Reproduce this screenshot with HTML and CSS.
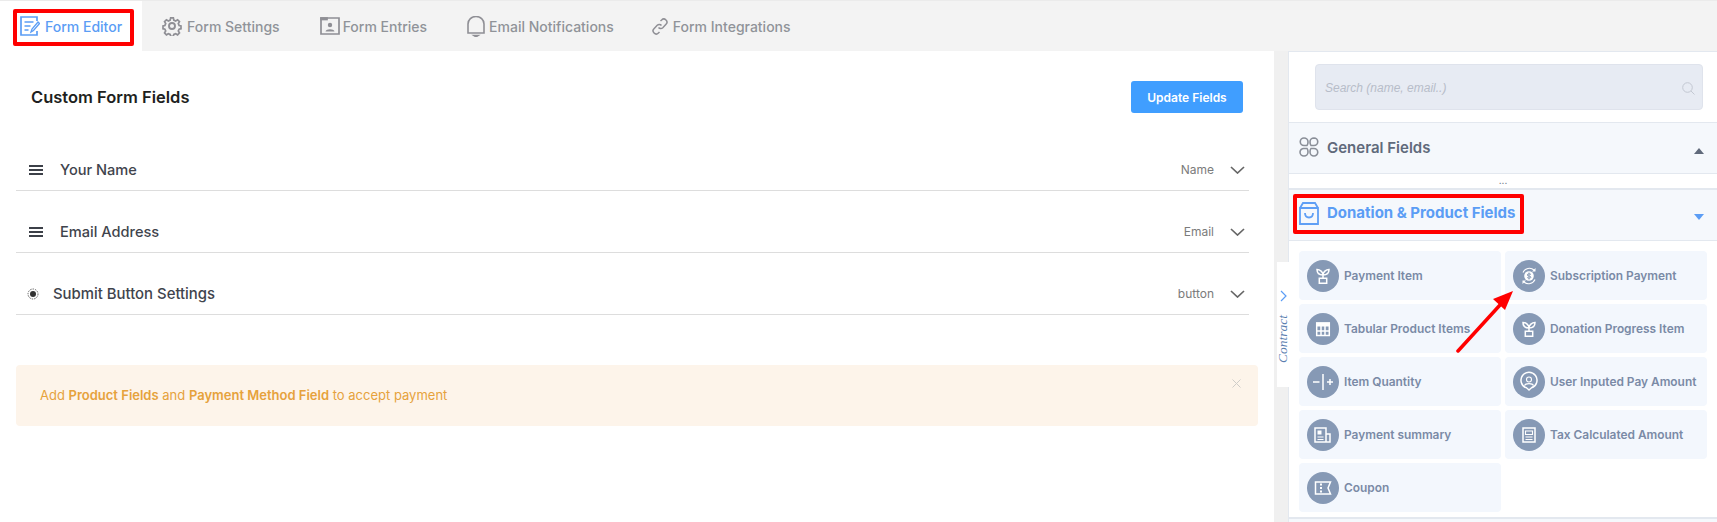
FILE: index.html
```html
<!DOCTYPE html>
<html lang="en">
<head>
<meta charset="utf-8">
<title>Form Editor</title>
<link rel="stylesheet" href="styles.css">
</head>
<body>
<nav class="tabs">
  <a class="tab tab-active">
    <svg class="ti ti-25" width="20" height="20" viewBox="0 0 20 20" fill="none" stroke="#5b9df5" stroke-width="1.700"><path d="M17 5V1H1v18h16v-4M4.500 6h9M4.500 10h6M4.500 14h4"/><path d="M11 16l1-3 6-7 1.500 1.500-6 7z" stroke-width="1.300"/></svg>
    Form Editor</a>
  <a class="tab">
    <svg class="ti ti-25" width="20" height="20" viewBox="0 0 20 20" fill="none" stroke="#8f8f95" stroke-width="1.900"><path d="M8.500 1h3l.5 2.500 2 .9 2.200-1.300 2.100 2.100-1.300 2.200.9 2 2.100.6v3l-2.100.5-.9 2 1.300 2.200-2.100 2.100-2.200-1.300-2 .9-.5 2.100h-3l-.5-2.100-2-.9-2.200 1.300-2.100-2.100 1.300-2.200-.9-2-2.100-.5v-3l2.100-.6.900-2-1.300-2.200 2.100-2.100 2.200 1.300 2-.9z" transform="translate(1 1) scale(.9)"/><circle cx="10" cy="10" r="3"/></svg>
    Form Settings</a>
  <a class="tab">
    <svg class="ti ti-23" width="20" height="20" viewBox="0 0 20 20" fill="none" stroke="#8f8f95" stroke-width="1.700"><path d="M1 2h18v16H1z"/><path d="M1 2h6v1.500H1z" fill="#8f8f95"/><circle cx="10" cy="9" r="2.200" fill="#8f8f95" stroke="none"/><path d="M5.500 15.500c.5-3 8.500-3 9 0z" fill="#8f8f95" stroke="none"/></svg>
    Form Entries</a>
  <a class="tab">
    <svg class="ti ti-22" width="18" height="21" viewBox="0 0 18 21" fill="none" stroke="#8f8f95" stroke-width="1.600"><path d="M1 17V8a8 7.500 0 0 1 16 0v9z"/><path d="M7 19.500h4l-2 1.300z" fill="#8f8f95"/></svg>
    Email Notifications</a>
  <a class="tab tab-link">
    <svg class="ti ti-21" width="16" height="17" viewBox="0 0 16 17" fill="none" stroke="#8f8f95" stroke-width="1.500"><path d="M6.500 9.500a3 3 0 0 0 4.300.2l3.200-3.400a3 3 0 0 0-4.400-4.300L8.500 3"/><path d="M9.500 7.500a3 3 0 0 0-4.300-.2L2 10.700a3 3 0 0 0 4.400 4.300L7.500 14"/></svg>
    Form Integrations</a>
</nav>

<div class="workspace">
  <main class="editor">
    <header class="editor-head">
      <h1>Custom Form Fields</h1>
      <button class="update">Update Fields</button>
    </header>
    <ul class="fields">
      <li class="field">
        <span class="burger"></span>
        <span class="field-name">Your Name</span>
        <span class="field-type">Name</span>
        <svg class="chev" width="15" height="8" viewBox="0 0 15 8" fill="none" stroke="#666" stroke-width="1.700"><path d="M1 1l6.500 6L14 1"/></svg>
      </li>
      <li class="field">
        <span class="burger"></span>
        <span class="field-name">Email Address</span>
        <span class="field-type">Email</span>
        <svg class="chev" width="15" height="8" viewBox="0 0 15 8" fill="none" stroke="#666" stroke-width="1.700"><path d="M1 1l6.500 6L14 1"/></svg>
      </li>
      <li class="field field-submit">
        <svg class="dot" width="12" height="12" viewBox="0 0 12 12" fill="none"><circle cx="6" cy="6" r="5" stroke="#666" stroke-width="1" stroke-dasharray="1.500 1"/><circle cx="6" cy="6" r="3" fill="#333"/></svg>
        <span class="field-name">Submit Button Settings</span>
        <span class="field-type">button</span>
        <svg class="chev" width="15" height="8" viewBox="0 0 15 8" fill="none" stroke="#666" stroke-width="1.700"><path d="M1 1l6.500 6L14 1"/></svg>
      </li>
    </ul>
    <div class="alert">
      <p>Add <b>Product Fields</b> and <b>Payment Method Field</b> to accept payment</p>
      <svg class="alert-x" width="9" height="9" viewBox="0 0 9 9" stroke="#cfcdc9" stroke-width="1"><path d="M.5.500l8 8M8.500.500l-8 8"/></svg>
    </div>
  </main>

  <div class="gutter"></div>

  <aside class="side">
    <div class="search-wrap">
      <div class="search">
        <span>Search (name, email..)</span>
        <svg width="13" height="13" viewBox="0 0 13 13" fill="none" stroke="#c3c8d2" stroke-width="1"><circle cx="5.500" cy="5.500" r="4.800"/><path d="M9 9l3.500 3.500"/></svg>
      </div>
    </div>

    <section class="acc acc-general">
      <svg width="20" height="20" viewBox="0 0 20 20" fill="none" stroke="#8a8f98" stroke-width="1.600"><path d="M5 1a4 4 0 0 1 4 4c0 1.500-.5 3-1 3.500H5A3.700 3.700 0 0 1 5 1zM15 1a3.700 3.700 0 0 1 0 7.500h-3C11.500 8 11 6.500 11 5a4 4 0 0 1 4-4zM5 11.500h3c.5.500 1 2 1 3.500a4 4 0 0 1-8 0 3.700 3.700 0 0 1 4-3.500zM12 11.500h3a3.700 3.700 0 0 1 0 7.500 4 4 0 0 1-4-4c0-1.500.5-3 1-3.500z"/></svg>
      <h2>General Fields</h2>
      <i class="caret caret-up"></i>
    </section>
    <div class="dots">...</div>
    <section class="acc acc-product">
      <svg width="20" height="23" viewBox="0 0 20 23" fill="none" stroke="#5f9ff5" stroke-width="1.800"><path d="M1 6h18v16H1zM1 6l3-5h12l3 5"/><path d="M6 11c0 6 8 6 8 0"/></svg>
      <h2>Donation &amp; Product Fields</h2>
      <i class="caret caret-down"></i>
    </section>

    <div class="cards">
      <div class="card"><span class="ic"><svg viewBox="0 0 32 32"><use href="#plant"/></svg></span>Payment Item</div>
      <div class="card"><span class="ic"><svg viewBox="0 0 32 32"><path class="s1" d="M10 12.500a7 7 0 0 1 11-2.500M22 19.500a7 7 0 0 1-11 2.500"/><path class="f" d="M22.500 8v3.500H19zM9.500 24v-3.500H13z"/><circle class="f" cx="16" cy="16" r="4.800"/><path class="d" d="M18 14.500c-.8-.9-3.800-.9-3.800.5s3.800.8 3.800 2.100-2.900 1.300-3.800.4M16 12.500v7"/></svg></span>Subscription Payment</div>
      <div class="card"><span class="ic"><svg viewBox="0 0 32 32"><path class="f" d="M9 9.500h14v4H9z"/><path class="s" d="M9.700 10h12.600v12.500H9.700zM9.700 18h12.600M14 13v9.500M18 13v9.500"/></svg></span>Tabular Product Items</div>
      <div class="card"><span class="ic"><svg viewBox="0 0 32 32"><use href="#plant"/></svg></span>Donation Progress Item</div>
      <div class="card"><span class="ic"><svg viewBox="0 0 32 32"><path class="s" d="M6 16h6.500M16 8v16M20 16h6M23 13v6"/></svg></span>Item Quantity</div>
      <div class="card"><span class="ic"><svg viewBox="0 0 32 32"><path class="s" d="M16 24l-2.500-2.200A8 8 0 1 1 18.500 21.800z"/><circle class="s1" cx="16" cy="13.500" r="2.500"/><path class="s1" d="M11.500 19.500c1-2.500 8-2.500 9 0"/></svg></span>User Inputed Pay Amount</div>
      <div class="card"><span class="ic"><svg viewBox="0 0 32 32"><path class="s" d="M8 9h11v14H8zM19 15h4v8h-4"/><path class="f" d="M10.500 11.500h4v4h-4z"/><path class="s1" d="M10.500 18h6M10.500 20.500h6"/></svg></span>Payment summary</div>
      <div class="card"><span class="ic"><svg viewBox="0 0 32 32"><path class="s" d="M10 9h12v14H10z"/><path class="s1" d="M12.500 12h7v3.500h-7zM12.500 18h7M12.500 20.500h7"/></svg></span>Tax Calculated Amount</div>
      <div class="card"><span class="ic"><svg viewBox="0 0 32 32"><path class="s" d="M8.500 10h15l-2.500 6 2.500 6h-15z"/><path class="s2" d="M14 11.500v2M14 15v2M14 18.500v2"/></svg></span>Coupon</div>
    </div>
    <div class="side-foot"></div>
  </aside>
</div>

<div class="contract">
  <svg width="7" height="12" viewBox="0 0 7 12" fill="none" stroke="#5b9df5" stroke-width="1.200"><path d="M1 1l5 5-5 5"/></svg>
  <span>Contract</span>
</div>

<span class="mark mark-tab"></span>
<span class="mark mark-sec"></span>
<svg class="arrow" width="60" height="64" viewBox="0 0 60 64"><path d="M2 61L44 15" stroke="#f00" stroke-width="3.500" stroke-linecap="round"/><path d="M57 1L49 20 37 9z" fill="#f00"/></svg>

<svg class="defs" width="0" height="0"><defs><g id="plant"><path class="s" d="M12.300 18.300h7.400v5h-7.400z"/><path class="s" d="M16 18v-3c0-3-3-5.500-6-5.500 0 3.500 2.500 5.500 6 5.500M16 15c0-3 3-5.500 6-5.500 0 3.500-2.500 5.500-6 5.500"/></g></defs></svg>
</body>
</html>
```
FILE: styles.css
```css
* { box-sizing: border-box; }
html, body { margin: 0; padding: 0; }
body {
  position: relative;
  width: 1717px;
  height: 522px;
  overflow: hidden;
  background: #fff;
  font-family: Inter, "Liberation Sans", sans-serif;
}

/* tabs */
.tabs {
  display: flex;
  height: 51px;
  background: #f3f3f3;
  border-top: 1px solid #ebebeb;
}
.tab {
  display: flex;
  align-items: center;
  padding: 0 20px;
  font-size: 14px;
  font-weight: 500;
  color: #909399;
}
.tab-active { background: #fff; color: #5b9df5; }
.tab-link { margin-left: -2px; }
.ti-25 { margin-right: 5px; }
.ti-23 { margin-right: 3px; }
.ti-22 { margin-right: 4px; }
.ti-21 { margin-right: 5px; }

/* layout */
.workspace { display: flex; height: 471px; }
.editor { width: 1274px; background: #fff; padding: 0 16px; flex: none; }
.gutter { width: 14px; background: #f0f0f0; flex: none; }
.side {
  width: 429px;
  flex: none;
  border-left: 1px solid #e3e8ef;
  border-top: 1px solid #e3e8ef;
  background: #fff;
}

/* editor */
.editor-head {
  display: flex;
  align-items: center;
  justify-content: space-between;
  padding: 30px 15px 0 15px;
  height: 62px;
}
.editor-head h1 { margin: 0; font-size: 16.500px; font-weight: 600; color: #1e1f21; }
.update {
  width: 112px;
  height: 32px;
  border: 0;
  border-radius: 3px;
  background: #409eff;
  color: #fff;
  font: 600 12px Inter, sans-serif;
}
.fields { list-style: none; margin: 16px 0 0; padding: 0; width: 1233px; }
.field {
  display: flex;
  align-items: center;
  height: 62px;
  padding: 20px 4px 0 13px;
  border-bottom: 1px solid #ddd;
}
.field-submit { padding-left: 11px; }
.burger {
  width: 14px;
  height: 10px;
  margin-right: 17px;
  border-top: 2px solid #3c4048;
  border-bottom: 2px solid #3c4048;
  background: linear-gradient(#3c4048, #3c4048) center / 100% 2px no-repeat;
}
.dot { margin-right: 14px; }
.field-name { font-size: 14.600px; font-weight: 500; color: #3f444d; }
.field-submit .field-name { font-size: 14.900px; }
.field-type { margin-left: auto; margin-right: 16px; font-size: 12px; color: #7b7b7b; }
.alert {
  display: flex;
  justify-content: space-between;
  align-items: flex-start;
  height: 61px;
  width: 1242px;
  margin-top: 50px;
  padding: 22px 17px 0 24px;
  background: #fdf4ea;
  border-radius: 4px;
}
.alert p { margin: 0; font-size: 13px; color: #e6a23c; }
.alert b { font-weight: 600; }
.alert-x { margin-top: -8px; }

/* sidebar */
.search-wrap { padding: 12px 14px 12px 26px; height: 70px; }
.search {
  display: flex;
  align-items: center;
  justify-content: space-between;
  height: 46px;
  padding: 2px 7px 0 9px;
  background: #e7ebf3;
  border: 1px solid #dfe3ec;
  border-radius: 4px;
  font-family: "Liberation Sans", sans-serif;
  font-size: 12px;
  font-style: italic;
  color: #b7bdc9;
}
.acc {
  display: flex;
  align-items: center;
  padding: 0 13px 0 10px;
  background: #f5f8fc;
  border-top: 1px solid #e3e8ef;
  border-bottom: 1px solid #e3e8ef;
}
.acc h2 { margin: 0 0 0 8px; font-size: 15px; font-weight: 600; }
.acc-general { height: 52px; color: #606a7b; }
.acc-general h2 { margin-top: -1px; }
.acc-general svg { margin-top: -2px; }
.acc-product { height: 53px; color: #5b9df5; border-top-width: 2px; }
.acc-product svg { margin-top: -4px; }
.acc-product h2 { margin-top: -5px; font-weight: 650; }
.caret { margin-left: auto; width: 0; height: 0; border-left: 5px solid transparent; border-right: 5px solid transparent; }
.caret-up { border-bottom: 6px solid #606a7b; margin-top: 5px; }
.caret-down { border-top: 6px solid #5b9df5; margin-top: 4px; }
.dots { height: 14px; text-align: center; font-size: 10px; line-height: 12px; color: #606a7b; }
.cards {
  display: grid;
  grid-template-columns: 202px 202px;
  grid-auto-rows: 49px;
  gap: 4px;
  padding: 10px 0 0 10px;
  height: 276px;
}
.card {
  display: flex;
  align-items: center;
  padding-left: 8px;
  background: #f3f7fd;
  border-radius: 4px;
  font-size: 11.900px;
  font-weight: 600;
  color: #7a8aa6;
}
.ic { flex: none; width: 32px; height: 32px; margin-right: 5px; border-radius: 50%; background: #8699b5; }
.ic svg { display: block; width: 32px; height: 32px; }
.s { fill: none; stroke: #fff; stroke-width: 1.500; }
.s1 { fill: none; stroke: #fff; stroke-width: 1.100; }
.s2 { fill: none; stroke: #fff; stroke-width: 2; }
.d { fill: none; stroke: #8699b5; stroke-width: 1; }
.f { fill: #fff; }
.side-foot { height: 6px; background: #f5f8fc; border-top: 2px solid #e3e8ef; }

/* overlays */
.contract {
  position: absolute;
  left: 1277px;
  top: 262px;
  width: 12px;
  height: 125px;
  background: #fff;
  display: flex;
  flex-direction: column;
  align-items: center;
  padding-top: 28px;
  gap: 13px;
}
.contract span {
  writing-mode: vertical-rl;
  transform: rotate(180deg);
  font: italic 13.500px "Liberation Serif", serif;
  color: #5b7eaf;
}
.mark { position: absolute; border: 4px solid #f00; border-radius: 2px; }
.mark-tab { left: 13px; top: 9px; width: 121px; height: 37px; }
.mark-sec { left: 1293px; top: 194px; width: 231px; height: 40px; }
.arrow { position: absolute; left: 1456px; top: 290px; }
.defs { position: absolute; }
```
